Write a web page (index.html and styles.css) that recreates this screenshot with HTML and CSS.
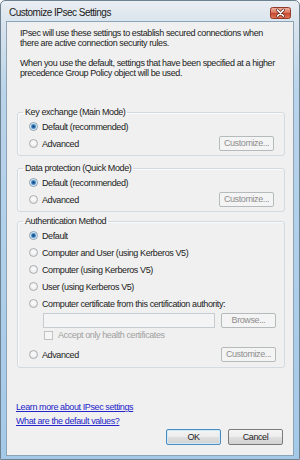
FILE: index.html
```html
<!DOCTYPE html>
<html>
<head>
<meta charset="utf-8">
<link rel="stylesheet" href="styles.css">
</head>
<body>
<div class="window">
  <div class="titlebar">
    <span class="title">Customize IPsec Settings</span>
    <span class="close">
      <svg width="21" height="12" viewBox="0 0 21 12">
        <defs>
          <linearGradient id="cg" x1="0" y1="0" x2="0" y2="1">
            <stop offset="0" stop-color="#f0b4a4"/>
            <stop offset="0.45" stop-color="#dc7a62"/>
            <stop offset="0.5" stop-color="#c8452c"/>
            <stop offset="1" stop-color="#e07a58"/>
          </linearGradient>
        </defs>
        <rect x="0.5" y="0.5" width="20" height="11" rx="2" fill="url(#cg)" stroke="#94392a"/>
        <path d="M7.5 3 L13.5 9 M13.5 3 L7.5 9" stroke="#5a2016" stroke-width="3" stroke-linecap="round"/>
        <path d="M7.5 3 L13.5 9 M13.5 3 L7.5 9" stroke="#ffffff" stroke-width="1.7" stroke-linecap="round"/>
      </svg>
    </span>
  </div>
  <div class="panel">
    <p class="intro">IPsec will use these settings to establish secured connections when<br>there are active connection security rules.</p>
    <p class="intro second">When you use the default, settings that have been specified at a higher<br>precedence Group Policy object will be used.</p>

    <fieldset class="group g1">
      <legend>Key exchange (Main Mode)</legend>
      <div class="rows">
        <div class="row"><span class="radio on"></span><span>Default (recommended)</span></div>
        <div class="row split"><span class="opt"><span class="radio"></span><span>Advanced</span></span><button class="btn" disabled>Customize...</button></div>
      </div>
    </fieldset>

    <fieldset class="group g2">
      <legend>Data protection (Quick Mode)</legend>
      <div class="rows">
        <div class="row"><span class="radio on"></span><span>Default (recommended)</span></div>
        <div class="row split"><span class="opt"><span class="radio"></span><span>Advanced</span></span><button class="btn" disabled>Customize...</button></div>
      </div>
    </fieldset>

    <fieldset class="group g3">
      <legend>Authentication Method</legend>
      <div class="rows wide">
        <div class="row"><span class="radio on"></span><span>Default</span></div>
        <div class="row"><span class="radio"></span><span>Computer and User (using Kerberos V5)</span></div>
        <div class="row"><span class="radio"></span><span>Computer (using Kerberos V5)</span></div>
        <div class="row"><span class="radio"></span><span>User (using Kerberos V5)</span></div>
        <div class="row"><span class="radio"></span><span>Computer certificate from this certification authority:</span></div>
        <div class="inrow"><span class="field"></span><button class="btn" disabled>Browse...</button></div>
        <div class="chkrow"><span class="check"></span><span>Accept only health certificates</span></div>
        <div class="row split last"><span class="opt"><span class="radio"></span><span>Advanced</span></span><button class="btn" disabled>Customize...</button></div>
      </div>
    </fieldset>

    <div class="links">
      <a href="#">Learn more about IPsec settings</a>
      <a href="#">What are the default values?</a>
    </div>
    <div class="actions">
      <button class="btn active default">OK</button>
      <button class="btn active">Cancel</button>
    </div>
  </div>
</div>
</body>
</html>
```

FILE: styles.css
```css
html, body {
  margin: 0;
  padding: 0;
  background: #ffffff;
}

.window {
  box-sizing: border-box;
  width: 300px;
  height: 460px;
  display: flex;
  flex-direction: column;
  border: 1px solid #6f8292;
  border-radius: 5px 5px 0 0;
  background: linear-gradient(180deg, #e9eef2 0px, #dbe5ed 20px, #b9d4ea 90px, #a4c9e8 100%);
  padding-bottom: 3px;
  font-family: "Liberation Sans", Arial, sans-serif;
  font-size: 9px;
  letter-spacing: -0.4px;
  color: #222222;
}

.titlebar {
  height: 20px;
  box-sizing: border-box;
  display: flex;
  align-items: flex-start;
  padding: 6px 8px 0 8px;
}

.title {
  font-size: 10px;
  letter-spacing: -0.5px;
  line-height: 12px;
  color: #1a1a1a;
}

.close {
  margin-left: auto;
  display: block;
  height: 12px;
}

.close svg {
  display: block;
}

.panel {
  flex: 1;
  margin: 0 5px;
  border: 1px solid #8ea3b5;
  background: #f0f0f0;
  padding: 6px 8px 0 10px;
  display: flex;
  flex-direction: column;
}

.intro {
  margin: 0 0 0 3px;
  line-height: 10px;
}

.intro.second {
  margin-top: 10px;
}

.group {
  margin: 0;
  padding: 0;
  border: 1px solid #d3dbe1;
  border-radius: 3px;
  box-shadow: 1px 1px 0 #fbfbfb inset;
  min-width: 0;
}

.group legend {
  padding: 0 2px;
  margin-left: 5px;
  line-height: 10px;
}

.g1 { margin-top: 29px; }
.g2 { margin-top: 7px; }
.g3 { margin-top: 4px; }

.rows {
  padding: 1px 10px 3px 11px;
}

.rows.wide {
  padding: 1px 8px 4px 11px;
}

.row {
  display: flex;
  align-items: center;
  height: 17px;
  gap: 4px;
}

.row.split {
  justify-content: space-between;
}

.row.last {
  margin-top: 4px;
}

.opt {
  display: flex;
  align-items: center;
  gap: 4px;
}

.radio {
  box-sizing: border-box;
  width: 9px;
  height: 9px;
  border-radius: 50%;
  border: 1px solid #a9adb0;
  background: radial-gradient(circle at 50% 40%, #fdfdfd 0, #eeeeee 60%, #dcdcdc 100%);
  flex: none;
}

.radio.on {
  border-color: #8a9fb1;
  background: radial-gradient(circle at 50% 50%, #123f6e 0, #2a6fad 1.4px, #8cc0ea 2.6px, #eef4f8 3.2px, #e2e2e2 100%);
}

.inrow {
  display: flex;
  align-items: center;
  margin-top: 1px;
  padding-left: 14px;
  gap: 6px;
}

.field {
  box-sizing: border-box;
  width: 172px;
  height: 15px;
  border: 1px solid #c7ccd0;
  background: #f4f4f4;
}

.chkrow {
  display: flex;
  align-items: center;
  height: 14px;
  padding-left: 15px;
  gap: 5px;
  color: #a0a0a0;
}

.check {
  box-sizing: border-box;
  width: 9px;
  height: 9px;
  border: 1px solid #c2c2c2;
  background: #f6f6f6;
  flex: none;
}

.btn {
  box-sizing: border-box;
  width: 55px;
  height: 15px;
  padding: 0;
  margin: 0;
  font: inherit;
  letter-spacing: -0.4px;
  line-height: 13px;
  border: 1px solid #b5babd;
  border-radius: 2px;
  background: #f4f4f4;
  color: #8e8e8e;
}

.btn.active {
  height: 16px;
  color: #1e1e1e;
  border-color: #7a7a7a;
  background: linear-gradient(180deg, #f4f4f4 0%, #ececec 50%, #dfdfdf 51%, #d2d2d2 100%);
}

.btn.default {
  border-color: #4a8cc2;
  box-shadow: inset 0 0 0 1px #cfe9f7;
}

.links {
  margin-top: 32px;
  margin-left: -1px;
  display: flex;
  flex-direction: column;
  align-items: flex-start;
}

.links a {
  line-height: 14px;
  color: #2424c8;
  text-decoration: underline;
}

.actions {
  margin-top: 1px;
  margin-right: 2px;
  display: flex;
  justify-content: flex-end;
  gap: 7px;
}
```
